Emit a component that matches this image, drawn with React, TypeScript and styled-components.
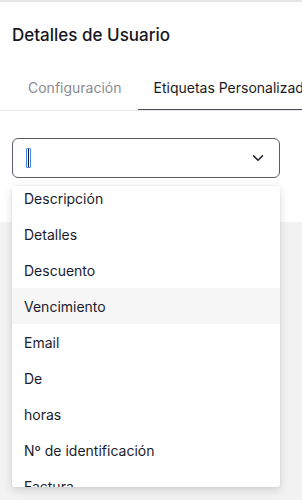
import styled, { createGlobalStyle } from 'styled-components';
import { useLayoutEffect, useRef } from 'react';
import { ChevronDown } from 'lucide-react';

const GlobalStyle = createGlobalStyle`
  body {
    margin: 0;
    font-family: 'Inter', 'Noto Sans', sans-serif;
    background: #f2f2f2;
  }
`;

const Page = styled.div`
  min-height: 500px;
  background: #f2f2f2;
`;

const Panel = styled.div`
  background: #fff;
  border-top: 2px solid #e6e6e6;
  height: 220px;
  padding-top: 21px;
  box-sizing: border-box;
  height: 222px;
`;

const Title = styled.h2`
  margin: 0 12px;
  font-size: 17px;
  line-height: 24px;
  font-weight: 500;
  color: #16161d;
`;

const Tabs = styled.div`
  display: flex;
  margin-top: 19px;
  padding-left: 12px;
  border-bottom: 1px solid #e8e8e8;
  overflow: hidden;
  white-space: nowrap;
`;

const Tab = styled.div<{ $active?: boolean }>`
  padding: 12px 16px 11px;
  font-size: 14px;
  line-height: 20px;
  color: ${(p) => (p.$active ? '#1a1a24' : '#8b8b92')};
  border-bottom: 2px solid ${(p) => (p.$active ? '#4b4e5a' : 'transparent')};
  margin-bottom: -1px;
  flex-shrink: 0;
`;

const Field = styled.div`
  position: relative;
  margin: 27px 22px 0 12px;
`;

const Input = styled.div`
  height: 40px;
  box-sizing: border-box;
  border: 1px solid #5a5c66;
  border-radius: 6px;
  display: flex;
  align-items: center;
  justify-content: space-between;
  padding: 0 12px 0 13px;
  color: #1a1a24;
`;

const Caret = styled.span`
  display: flex;
  justify-content: center;
  width: 3px;
  height: 18px;
  border: 1px solid #3b82f6;
  border-radius: 1px;

  &::after {
    content: '';
    width: 1px;
    background: #1a1a24;
  }
`;

const Menu = styled.div`
  position: absolute;
  top: calc(100% + 8px);
  left: 0;
  right: 0;
  height: 301px;
  background: #fff;
  border-radius: 3px;
  box-shadow: 0 3px 10px rgba(0, 0, 0, 0.14), 0 0 2px rgba(0, 0, 0, 0.08);
  overflow-y: auto;
  scrollbar-width: none;

  &::-webkit-scrollbar {
    display: none;
  }
`;

const Option = styled.div<{ $hover?: boolean }>`
  height: 36px;
  display: flex;
  align-items: center;
  padding-left: 12px;
  font-size: 14px;
  color: #1b1b2e;
  background: ${(p) => (p.$hover ? '#f6f6f6' : '#fff')};
`;

const options = [
  'Descripción',
  'Detalles',
  'Descuento',
  'Vencimiento',
  'Email',
  'De',
  'horas',
  'Nº de identificación',
  'Factura',
  'Fecha',
];

export default function App() {
  const menuRef = useRef<HTMLDivElement>(null);

  useLayoutEffect(() => {
    if (menuRef.current) menuRef.current.scrollTop = 6;
  }, []);

  return (
    <Page>
      <GlobalStyle />
      <Panel>
        <Title>Detalles de Usuario</Title>
        <Tabs>
          <Tab>Configuración</Tab>
          <Tab $active>Etiquetas Personalizadas</Tab>
        </Tabs>
        <Field>
          <Input>
            <Caret />
            <ChevronDown size={18} strokeWidth={2} color="#1a1a24" />
          </Input>
          <Menu ref={menuRef}>
            {options.map((o) => (
              <Option key={o} $hover={o === 'Vencimiento'}>
                {o}
              </Option>
            ))}
          </Menu>
        </Field>
      </Panel>
    </Page>
  );
}
